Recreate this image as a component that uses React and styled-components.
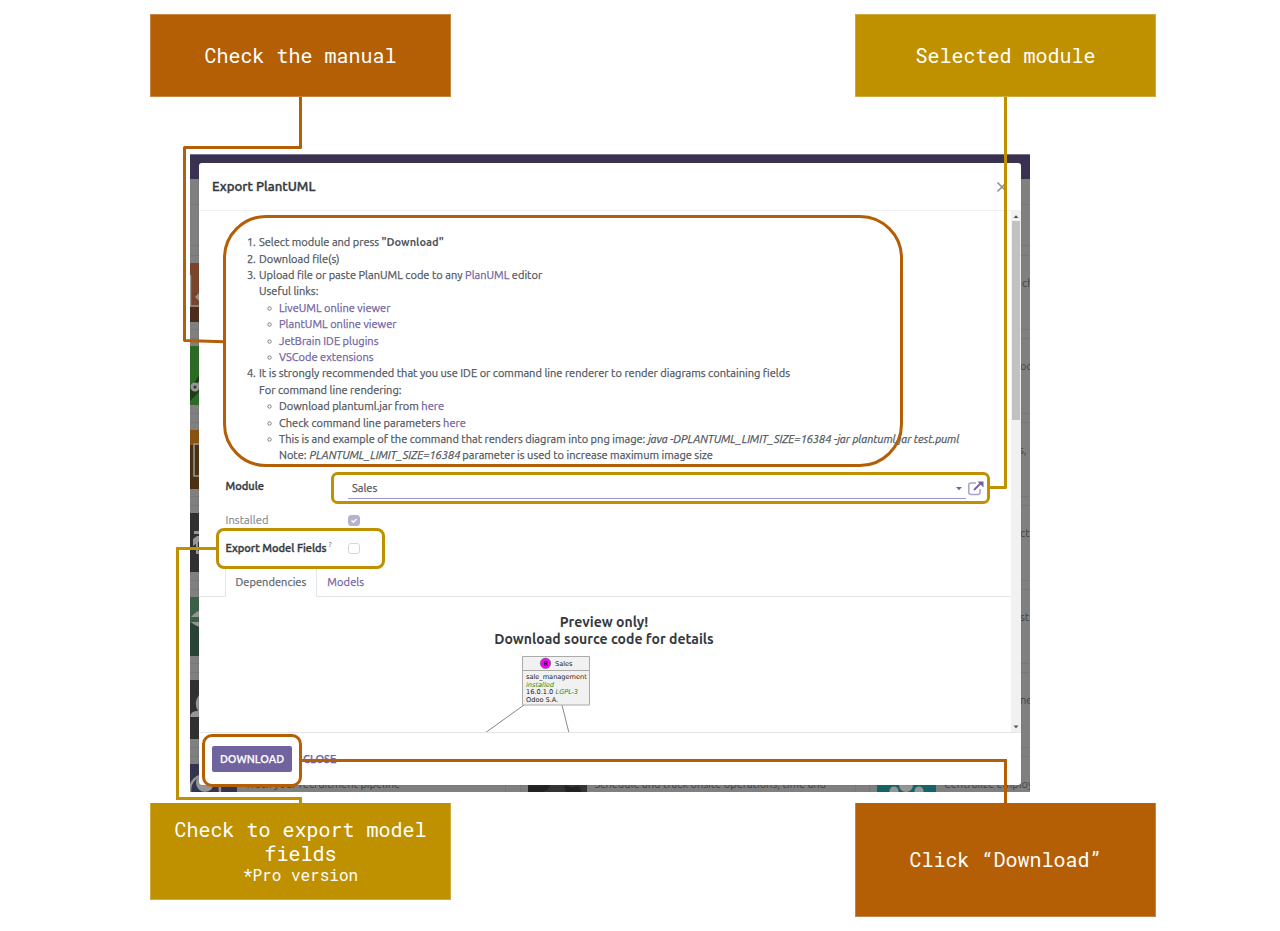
import React from "react";
import styled, { createGlobalStyle } from "styled-components";

const ORANGE = "#b45f06";
const GOLD = "#bf9000";
const PURPLE = "#71639e";

const Global = createGlobalStyle`
  * { box-sizing: border-box; }
  body { margin: 0; background: #fff; }
`;

const Canvas = styled.main`
  position: relative;
  width: 1280px;
  height: 931px;
  overflow: hidden;
  background: #fff;
  font: 11.05px/16.4px Ubuntu, "Noto Sans", sans-serif;
  color: #50575e;
`;

const Frame = styled.section`
  position: absolute;
  left: 190px;
  top: 154px;
  width: 840px;
  height: 638px;
  overflow: hidden;
  background: #808080;
  border-top: 1px solid #7a758a;
`;

const NavBar = styled.div`
  height: 24px;
  background: #3a3150;
`;

const SearchStrip = styled.div`
  height: 67px;
  border-bottom: 1px solid #767676;
  background: linear-gradient(#808080 25px, #777 25px, #777 26px, #808080 26px);
`;

const CardGrid = styled.div`
  display: grid;
  grid-template-columns: repeat(3, 336px);
  grid-auto-rows: 75.5px;
  gap: 8px 13.5px;
  margin: 8.5px 0 0 -20px;
`;

const Card = styled.div`
  display: flex;
  gap: 8px;
  padding: 7px;
  border: 1px solid #777;
  overflow: hidden;
  white-space: nowrap;
  color: #3f4246;
`;

const AppIcon = styled.div`
  flex: none;
  width: 59px;
  height: 59px;
  background: ${(p) => p.$bg};
  svg { display: block; }
`;

const CardText = styled.div`
  padding: ${(p) => (p.$indent ? `12px 0 0 ${p.$indent}px` : "12px 0 0")};
  line-height: 17px;
`;

const Dialog = styled.div`
  position: absolute;
  left: 9px;
  top: 8px;
  width: 822px;
  height: 622px;
  display: flex;
  flex-direction: column;
  background: #fff;
  border-radius: 3px;
  box-shadow: 0 0 1px #555;
  overflow: hidden;
  -webkit-text-stroke: 0.25px;
`;

const Header = styled.header`
  flex: none;
  height: 48px;
  display: flex;
  align-items: center;
  justify-content: space-between;
  padding: 0 13px 0 13px;
  border-bottom: 1px solid #eef0f2;
  font-size: 13.2px;
  font-weight: 500;
  color: #343a40;
  -webkit-text-stroke: 0.4px;
`;

const Body = styled.div`
  flex: 1;
  min-height: 0;
  display: flex;
`;

const Content = styled.div`
  flex: 1;
  overflow: hidden;
`;

const Track = styled.div`
  width: 10px;
  display: flex;
  flex-direction: column;
  align-items: center;
  background: #f1f1f1;
`;

const Thumb = styled.div`
  width: 8px;
  height: 199px;
  background: #c1c1c1;
  margin: -1px 0 auto;
`;

const Manual = styled.div`
  padding: 23.3px 0 0 48px;
  height: 254px;
`;

const Line = styled.div`
  display: flex;
  height: 16.4px;
  padding-left: ${(p) => (p.$sub ? 20 : 0)}px;
  white-space: pre;
`;

const Marker = styled.span`
  width: 12px;
  letter-spacing: -0.3px;
  svg { display: block; margin-top: 6px; }
`;

const Text = styled.span`
  display: inline-block;
  white-space: pre;
  margin-right: ${(p) => p.$gap || 0}px;
  letter-spacing: ${(p) => p.$ls || 0}px;
  b { font-weight: 600; -webkit-text-stroke: 0; }
`;

const Link = styled.a`
  color: ${PURPLE};
`;

const FormRow = styled.div`
  display: flex;
  align-items: center;
  height: ${(p) => p.$h}px;
  padding-left: 26.5px;
`;

const Label = styled.label`
  width: 122.5px;
  display: flex;
  font-weight: ${(p) => (p.$muted ? 400 : 500)};
  color: ${(p) => (p.$muted ? "#868b91" : "#343a40")};
  padding-bottom: ${(p) => p.$lift || 0}px;
  -webkit-text-stroke: ${(p) => (p.$muted ? 0.2 : 0.4)}px;
  sup { font-size: 8px; font-weight: 400; line-height: 10px; color: ${PURPLE}; margin-left: 2px; -webkit-text-stroke: 0; }
`;

const Field = styled.div`
  width: 618px;
  height: 21px;
  display: flex;
  align-items: center;
  justify-content: space-between;
  padding: 0 3px 0 4px;
  border-bottom: 1px solid #9d93c4;
`;

const Check = styled.span`
  width: 12px;
  height: 11px;
  border-radius: 3px;
  border: 1px solid ${(p) => (p.$on ? "#b8b1ce" : "#d5d7da")};
  background: ${(p) => (p.$on ? "#b8b1ce" : "#fff")};
  svg { display: block; }
`;

const Tabs = styled.div`
  display: flex;
  height: 29px;
  margin-top: 0;
  padding-left: 26px;
  border-bottom: 1px solid #e3e5e8;
`;

const Tab = styled.div`
  height: 29px;
  padding: 5px 9.5px 0;
  border: ${(p) => (p.$active ? "1px solid #e3e5e8" : "1px solid transparent")};
  border-bottom: 0;
  background: ${(p) => (p.$active ? "#fff" : "transparent")};
  color: ${(p) => (p.$active ? "#5d666f" : PURPLE)};
`;

const Preview = styled.div`
  display: flex;
  flex-direction: column;
  align-items: center;
  padding: 17px 2px 0 0;
  font-size: 14.03px;
  line-height: 17px;
  font-weight: 600;
  color: #343a40;
  -webkit-text-stroke: 0;
  svg { display: block; margin-top: 7px; }
`;

const Footer = styled.footer`
  flex: none;
  height: 53px;
  display: flex;
  align-items: center;
  gap: 11px;
  padding-left: 13px;
  border-top: 1px solid #e3e5ea;
  font-weight: 500;
`;

const Primary = styled.button`
  width: 80px;
  height: 26px;
  padding: 0;
  border: 0;
  border-radius: 2px;
  background: ${PURPLE};
  color: #fff;
  font: inherit;
`;

const Close = styled.span`
  color: ${PURPLE};
`;

const Connectors = styled.svg`
  position: absolute;
  inset: 0;
  fill: none;
  stroke-width: 3;
`;

const Callout = styled.div`
  position: absolute;
  left: ${(p) => p.$x}px;
  top: ${(p) => p.$y}px;
  width: 301px;
  height: ${(p) => p.$h}px;
  display: flex;
  flex-direction: column;
  align-items: center;
  justify-content: center;
  background: ${(p) => p.$color};
  border: 1px solid rgba(255, 255, 255, 0.25);
  border-top-width: ${(p) => (p.$flushTop ? 0 : 1)}px;
  padding-bottom: ${(p) => p.$rise ?? 1}px;
  color: #fff;
  font: 20px/24px "Roboto Mono", "Liberation Mono", monospace;
  text-align: center;
  small { font-size: 16px; line-height: 20px; }
`;

const rows = [
  ["#7a452a", "ch", 78], ["#2c6b24", "oc", 76], ["#885310", "s,", 75],
  ["#303030", "ct", 76], ["#3a6048", "st", 76], ["#303030", "ne", 76],
];

const IconArt = ({ i }) => (
  <svg width="59" height="59" viewBox="0 0 59 59">
    {i === 0 && <><path d="M0 44H59V59H0z" fill="#4c2c1d" /><path d="M12.500 12V43H30" fill="none" stroke="#959595" strokeWidth="1.5" /><path d="M17 34l5-5v10z" fill="#959595" /></>}
    {i === 1 && <><path d="M0 59L25 24V42L8 59z" fill="#1c3d18" /><circle cx="17" cy="41" r="3" fill="none" stroke="#959595" strokeWidth="3" /><path d="M19 38l5-6v10z" fill="#959595" /></>}
    {i === 2 && <><path d="M12 15H30V59H12z" fill="#4b3112" /><path d="M30 14H16V46H30" fill="none" stroke="#959595" strokeWidth="1.6" /></>}
    {i === 3 && <path d="M16 18h10v3H16zM15 26l4-3h7v6h-6v9h6v3h-8V31l-3 2z" fill="#959595" />}
    {i === 4 && <><path d="M0 26H59V59H0z" fill="#294335" /><path d="M13 20q6-7 13-8v8zM13 25h13v6q-8-1-13-6z" fill="#959595" /></>}
    {i === 5 && <path d="M12 37q1-7 8-6-5-8 1-16l5-2v24z" fill="#959595" />}
    {i === 6 && <><circle cx="27" cy="26" r="15" fill="none" stroke="#959595" strokeWidth="2.5" /><circle cx="27" cy="19" r="9" fill="#959595" /></>}
    {i === 7 && <path d="M0 10H14L22 22q-2 5-8 6H0zM36 20q6 5 14 2l3 4v4H38z" fill="#222" />}
    {i === 8 && <><circle cx="17" cy="27" r="4.5" fill="#959595" /><circle cx="42" cy="27" r="4.5" fill="#959595" /><circle cx="29" cy="21" r="7" fill="#959595" /></>}
  </svg>
);

const Dot = () => (
  <Marker><svg width="5" height="5"><circle cx="2.5" cy="2.5" r="1.7" fill="none" stroke="#6c757d" strokeWidth="0.9" /></svg></Marker>
);

const Arrow = ({ up }) => (
  <svg width="10" height="11"><path d={up ? "M2.5 7L5 4.300l2.5 2.700z" : "M2.5 4.5h5L5 7.200z"} fill="#505050" /></svg>
);

export default function App() {
  return (
    <Canvas>
      <Global />
      <Frame>
        <NavBar />
        <SearchStrip />
        <CardGrid>
          {rows.map(([bg, tail, indent], i) => (
            <React.Fragment key={i}>
              <Card><AppIcon $bg={bg}><IconArt i={i} /></AppIcon></Card>
              <Card />
              <Card><AppIcon $bg="#444" /><CardText $indent={indent}>{tail}</CardText></Card>
            </React.Fragment>
          ))}
          <Card><AppIcon $bg="#33344f"><IconArt i={6} /></AppIcon><CardText>Track your recruitment pipeline</CardText></Card>
          <Card><AppIcon $bg="#333"><IconArt i={7} /></AppIcon><CardText>Schedule and track onsite operations, time and<br />material</CardText></Card>
          <Card><AppIcon $bg="#146467"><IconArt i={8} /></AppIcon><CardText>Centralize employee information</CardText></Card>
        </CardGrid>
        <Dialog>
          <Header>
            <Text>Export PlantUML</Text>
            <svg width="12" height="12"><path d="M1.5 1.5l9 9M10.5 1.5l-9 9" stroke="#8b8b8b" strokeWidth="1.5" /></svg>
          </Header>
          <Body>
            <Content>
              <Manual>
                <Line><Marker>1.</Marker><Text $ls={-0.02}>Select module and press <b>"Download"</b></Text></Line>
                <Line><Marker>2.</Marker><Text>Download file(s)</Text></Line>
                <Line><Marker>3.</Marker><Text>Upload file or paste PlanUML code to any <Link>PlanUML</Link> editor</Text></Line>
                <Line><Marker /><Text>Useful links:</Text></Line>
                <Line $sub><Dot /><Link><Text>LiveUML online viewer</Text></Link></Line>
                <Line $sub><Dot /><Link><Text>PlantUML online viewer</Text></Link></Line>
                <Line $sub><Dot /><Link><Text>JetBrain IDE plugins</Text></Link></Line>
                <Line $sub><Dot /><Link><Text>VSCode extensions</Text></Link></Line>
                <Line><Marker>4.</Marker><Text>It is strongly recommended that you use IDE or command line renderer to render diagrams containing fields</Text></Line>
                <Line><Marker /><Text>For command line rendering:</Text></Line>
                <Line $sub><Dot /><Text>Download plantuml.jar from <Link>here</Link></Text></Line>
                <Line $sub><Dot /><Text>Check command line parameters <Link>here</Link></Text></Line>
                <Line $sub><Dot /><Text>This is and example of the command that renders diagram into png image: </Text><Text as="i" $ls={-0.05}>java -DPLANTUML_LIMIT_SIZE=16384 -jar plantuml.jar test.puml</Text></Line>
                <Line $sub><Marker /><Text $gap={0.5}>Note: </Text><Text as="i" $ls={-0.03} $gap={2}>PLANTUML_LIMIT_SIZE=16384</Text><Text>parameter is used to increase maximum image size</Text></Line>
              </Manual>
              <FormRow $h={47}>
                <Label $lift={4}><Text>Module</Text></Label>
                <Field>
                  <Text>Sales</Text>
                  <svg width="8" height="5"><path d="M1 1h6L4 4.300z" fill={PURPLE} /></svg>
                </Field>
                <svg width="18" height="17" viewBox="0 0 18 17">
                  <path d="M10 3H5Q2.800 3 2.800 5V12.500Q2.800 14.500 5 14.500H12Q14 14.500 14 12.500V9" fill="none" stroke="#a9a1cb" strokeWidth="1.500" />
                  <path d="M8 10L15 3" stroke={PURPLE} strokeWidth="1.800" /><path d="M11.500 1.500h6v6z" fill={PURPLE} />
                </svg>
              </FormRow>
              <FormRow $h={16}>
                <Label $muted><Text $ls={0.08}>Installed</Text></Label>
                <Check $on><svg width="10" height="9"><path d="M2.500 4.500L4.300 6.300 7.500 3" fill="none" stroke="#fff" strokeWidth="1.300" /></svg></Check>
              </FormRow>
              <FormRow $h={40}>
                <Label><Text>Export Model Fields</Text><sup>?</sup></Label>
                <Check />
              </FormRow>
              <Tabs>
                <Tab $active><Text $ls={0.04}>Dependencies</Text></Tab>
                <Tab><Text $ls={0.1}>Models</Text></Tab>
              </Tabs>
              <Preview>
                <Text>Preview only!</Text>
                <Text>Download source code for details</Text>
                <svg width="240" height="80" viewBox="484 655 240 80" fontFamily="DejaVu Sans" fontSize="6.600" fontWeight="400" fill="#222">
                  <path d="M524 705L485 733M562 705L569 733" stroke="#888" fill="none" />
                  <path d="M522.500 656.500h67v48.500h-67zM522.500 670.500h67" fill="#f1f1f1" stroke="#aaa" />
                  <circle cx="545.500" cy="663.300" r="5.200" fill="#f0f" stroke="#555" strokeWidth="0.600" />
                  <text x="543.200" y="666" fontFamily="Liberation Mono" fontWeight="700" fontSize="7.500">R</text>
                  <text x="555" y="666">Sales</text>
                  <text x="526" y="679">sale_management</text>
                  <text x="526" y="686.500" fontStyle="italic" fill="#228b22">installed</text>
                  <text x="526" y="694">16.0.1.0</text>
                  <text x="555.500" y="694" fontStyle="italic" fill="#228b22">LGPL-3</text>
                  <text x="526" y="701.500">Odoo S.A.</text>
                </svg>
              </Preview>
            </Content>
            <Track><Arrow up /><Thumb /><Arrow /></Track>
          </Body>
          <Footer>
            <Primary><Text>DOWNLOAD</Text></Primary>
            <Close><Text>CLOSE</Text></Close>
          </Footer>
        </Dialog>
      </Frame>
      <Connectors width="1280" height="931">
        <g stroke={ORANGE}>
          <path d="M300.500 96V147.500H184.500V340.500L224 341.800" strokeLinejoin="round" />
          <rect x="224.500" y="216.500" width="677" height="249" rx="41.500" />
          <path d="M301 760.500H1005.500V804" />
          <rect x="203.500" y="735.500" width="97" height="50" rx="8.500" />
        </g>
        <g stroke={GOLD}>
          <path d="M1005.500 96V487.500H989" strokeLinejoin="round" />
          <rect x="332.500" y="473.500" width="656" height="29" rx="5" />
          <path d="M217 548.500H177.500V798.500H300.500V804" />
          <rect x="217.500" y="529.500" width="166" height="38" rx="6.500" />
        </g>
      </Connectors>
      <Callout $x={150} $y={14} $h={83} $rise={2} $color={ORANGE}>Check the manual</Callout>
      <Callout $x={855} $y={14} $h={83} $rise={2} $color={GOLD}>Selected module</Callout>
      <Callout $x={150} $y={803} $h={97} $flushTop $rise={0} $color={GOLD}>Check to export model fields<small>*Pro version</small></Callout>
      <Callout $x={855} $y={803} $h={114} $flushTop $color={ORANGE}>Click “Download”</Callout>
    </Canvas>
  );
}
